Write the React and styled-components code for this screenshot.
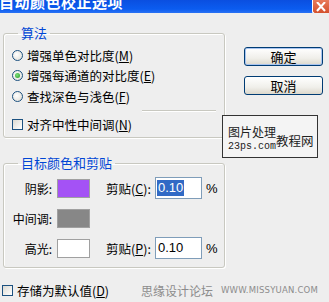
import React from 'react';
import styled, { createGlobalStyle } from 'styled-components';

const GlobalStyle = createGlobalStyle`
  body {
    margin: 0;
    background: #eeeeee;
    font-family: 'Noto Sans CJK SC', 'Noto Sans', sans-serif;
    font-size: 12px;
    color: #000;
  }
`;

const Dialog = styled.div`
  width: 329px;
  height: 302px;
  position: relative;
  overflow: hidden;
  background: #eeeeee;
`;

const TitleBar = styled.div`
  height: 13px;
  display: flex;
  justify-content: space-between;
  overflow: hidden;
  background: linear-gradient(#0a4fe0, #0b5cf0 70%, #2a72f4);
`;

const TitleText = styled.div`
  color: #fff;
  font-weight: bold;
  font-size: 15px;
  line-height: 18px;
  margin-top: -7px;
  margin-left: -1px;
  letter-spacing: 0.5px;
`;

const CloseButton = styled.div`
  width: 16px;
  height: 13px;
  background: linear-gradient(#e87a5a, #d4512e);
  border-left: 1px solid #fff;
  border-bottom: 1px solid #fff;
  border-bottom-left-radius: 3px;
  display: flex;
  align-items: flex-end;
  justify-content: center;
`;

const Body = styled.div`
  display: flex;
  padding: 13px 0 0 3px;
`;

const LeftColumn = styled.div`
  width: 222px;
  display: flex;
  flex-direction: column;
`;

const Group = styled.fieldset`
  margin: 0;
  margin-top: ${p => p.$top || 0}px;
  padding: 0 0 0 8px;
  height: ${p => p.$height}px;
  box-sizing: border-box;
  border: 1px solid #c8c8c0;
  border-radius: 3px;
  box-shadow: inset 1px 1px 0 #fff, 1px 1px 0 #fff;
`;

const Legend = styled.legend`
  color: #0046d5;
  font-size: 13px;
  line-height: 14px;
  padding: 0 3px;
  margin-left: 6px;
`;

const Spacer = styled.div`
  height: ${p => p.$h}px;
`;

const OptionRow = styled.label`
  display: flex;
  align-items: center;
  gap: 4px;
  height: ${p => p.$h || 20.5}px;
  margin-top: ${p => p.$top || 0}px;
  font-size: 12.5px;
  white-space: nowrap;
`;

const Radio = styled.span`
  width: 11px;
  height: 11px;
  box-sizing: border-box;
  border: 1px solid #1c5180;
  border-radius: 50%;
  background: radial-gradient(circle at 40% 40%, #ffffff, #dcdad2);
  display: flex;
  align-items: center;
  justify-content: center;
  flex-shrink: 0;
  &::after {
    content: '';
    width: 5px;
    height: 5px;
    border-radius: 50%;
    background: ${p => (p.$checked ? 'radial-gradient(circle at 40% 40%, #7fe07f, #1f9a1f)' : 'transparent')};
  }
`;

const Check = styled.span`
  width: 11px;
  height: 11px;
  box-sizing: border-box;
  border: 1px solid #1c5180;
  background: linear-gradient(135deg, #dcdad2, #ffffff);
  flex-shrink: 0;
`;

const Separator = styled.div`
  height: 1px;
  margin: 3px 8px 0 130px;
  background: #c8c8c0;
  box-shadow: 0 1px 0 #fff;
`;

const ColorRow = styled.div`
  display: flex;
  align-items: center;
  height: 30px;
`;

const ColorLabel = styled.span`
  width: 40px;
  display: flex;
  justify-content: flex-end;
  white-space: nowrap;
  font-size: 12px;
`;

const Swatch = styled.span`
  width: 33px;
  height: 19px;
  margin-left: 5px;
  box-sizing: border-box;
  border: 1px solid #a0a0a0;
  background: ${p => p.$color};
`;

const ClipLabel = styled.span`
  margin-left: 16px;
  width: 49px;
  font-size: 12.5px;
  white-space: nowrap;
`;

const NumberInput = styled.span`
  width: 47px;
  height: 22px;
  box-sizing: border-box;
  border: 1px solid #7f9db9;
  background: #fff;
  display: flex;
  align-items: center;
  padding-left: 1px;
  font-family: 'Liberation Sans', Arial, sans-serif;
  font-size: 13px;
  overflow: hidden;
`;

const Selected = styled.span`
  background: ${p => (p.$on ? '#316ac5' : 'transparent')};
  color: ${p => (p.$on ? '#fff' : '#000')};
  padding: 0 1px;
  line-height: 16px;
`;

const Percent = styled.span`
  margin-left: 4px;
  font-family: 'Liberation Sans', Arial, sans-serif;
  font-size: 13px;
`;

const RightColumn = styled.div`
  display: flex;
  flex-direction: column;
  gap: 10px;
  margin: 21px 0 0 19px;
`;

const Button = styled.button`
  width: 79px;
  height: 19px;
  padding: 0;
  border: 1px solid #003c74;
  border-radius: 3px;
  background: linear-gradient(#ffffff, #f0efea 60%, #dcd8cc);
  box-shadow: ${p => (p.$default ? 'inset 0 0 0 1px #a8c4f0' : 'none')};
  font-family: 'Noto Sans CJK SC', sans-serif;
  font-size: 13px;
  line-height: 17px;
  color: #000;
`;

const Footer = styled.div`
  display: flex;
  align-items: center;
  justify-content: space-between;
  margin-top: 12px;
  padding: 0 11px 0 2px;
`;

const FooterMark = styled.div`
  display: flex;
  align-items: center;
  gap: 8px;
  color: #8c8c8c;
  font-size: 12px;
`;

const FooterUrl = styled.span`
  font-family: 'DejaVu Sans', sans-serif;
  font-size: 8.5px;
  letter-spacing: 0.2px;
  color: #8c8c8c;
`;

const Watermark = styled.div`
  position: absolute;
  left: 222px;
  top: 115px;
  width: 96px;
  height: 43px;
  box-sizing: border-box;
  border: 1px solid #333;
  background: #f4f4f4;
  padding: 3px 0 0 5px;
  display: flex;
  align-items: center;
  color: #222;
  white-space: nowrap;
`;

const MarkLeft = styled.div`
  display: flex;
  flex-direction: column;
  line-height: 17px;
  font-size: 12px;
  flex-shrink: 0;
`;

const MarkUrl = styled.span`
  font-family: 'Liberation Mono', monospace;
  font-size: 10px;
  line-height: 14px;
`;

const MarkBig = styled.span`
  font-size: 12.5px;
  margin: 4px 0 0 0;
  flex-shrink: 0;
`;

const App = () => {
  return (
    <Dialog>
      <GlobalStyle />
      <TitleBar>
        <TitleText>自动颜色校正选项</TitleText>
        <CloseButton>
          <svg width="12" height="11" viewBox="0 0 12 11">
            <path d="M2 0 L10 9 M10 0 L2 9" stroke="#fff" strokeWidth="2" />
          </svg>
        </CloseButton>
      </TitleBar>
      <Body>
        <LeftColumn>
          <Group $height={112}>
            <Legend>算法</Legend>
            <Spacer $h={5} />
            <OptionRow>
              <Radio />
              <span>增强单色对比度(<u>M</u>)</span>
            </OptionRow>
            <OptionRow>
              <Radio $checked />
              <span>增强每通道的对比度(<u>E</u>)</span>
            </OptionRow>
            <OptionRow>
              <Radio />
              <span>查找深色与浅色(<u>F</u>)</span>
            </OptionRow>
            <Separator />
            <OptionRow $h={20} $top={4}>
              <Check />
              <span>对齐中性中间调(<u>N</u>)</span>
            </OptionRow>
          </Group>
          <Group $top={18} $height={112}>
            <Legend>目标颜色和剪贴</Legend>
            <Spacer $h={3} />
            <ColorRow>
              <ColorLabel>阴影:</ColorLabel>
              <Swatch $color="#a452f5" />
              <ClipLabel>剪贴(<u>C</u>):</ClipLabel>
              <NumberInput>
                <Selected $on>0.10</Selected>
              </NumberInput>
              <Percent>%</Percent>
            </ColorRow>
            <ColorRow>
              <ColorLabel>中间调:</ColorLabel>
              <Swatch $color="#878787" />
            </ColorRow>
            <ColorRow>
              <ColorLabel>高光:</ColorLabel>
              <Swatch $color="#ffffff" />
              <ClipLabel>剪贴(<u>P</u>):</ClipLabel>
              <NumberInput>
                <Selected>0.10</Selected>
              </NumberInput>
              <Percent>%</Percent>
            </ColorRow>
          </Group>
        </LeftColumn>
        <RightColumn>
          <Button $default>确定</Button>
          <Button>取消</Button>
        </RightColumn>
      </Body>
      <Footer>
        <OptionRow>
          <Check />
          <span>存储为默认值(<u>D</u>)</span>
        </OptionRow>
        <FooterMark>
          <span>思缘设计论坛</span>
          <FooterUrl>WWW.MISSYUAN.COM</FooterUrl>
        </FooterMark>
      </Footer>
      <Watermark>
        <MarkLeft>
          <span>图片处理</span>
          <MarkUrl>23ps.com</MarkUrl>
        </MarkLeft>
        <MarkBig>教程网</MarkBig>
      </Watermark>
    </Dialog>
  );
};

export default App;
